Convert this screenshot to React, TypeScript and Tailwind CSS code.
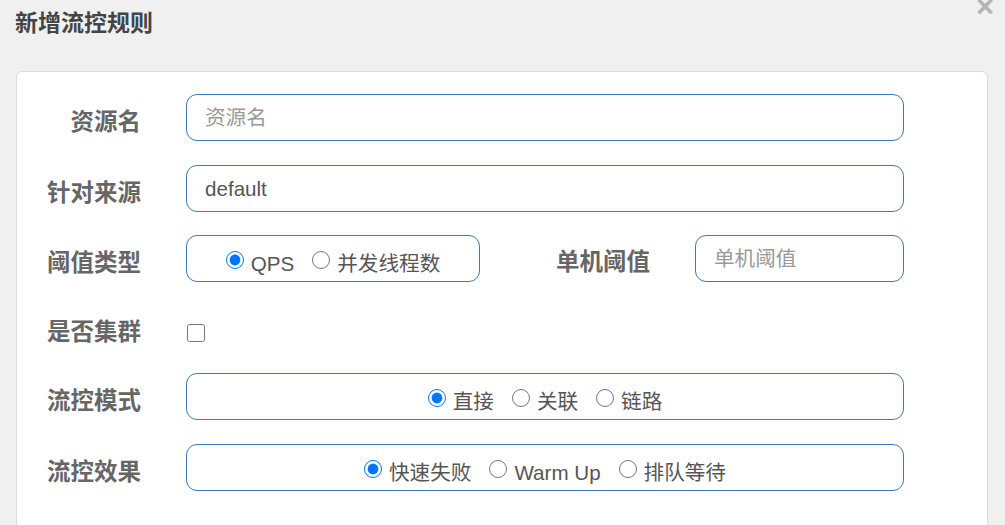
import { useState } from "react";

const font = { fontFamily: '"Liberation Sans", "Noto Sans CJK SC", sans-serif' };

const Label = ({ text, className = "w-[124px] translate-y-[5px]" }: { text: string; className?: string }) => (
    <div className={`${className} shrink-0 text-right text-[23.5px] font-bold text-[#666] leading-none`}>
        {text}
    </div>
);

const Radio = ({ label, checked, onChange }: { label: string; checked: boolean; onChange: () => void }) => (
    <label className="flex items-center gap-[7px] text-[20.6px] text-[#555] cursor-pointer">
        <input
            type="radio"
            checked={checked}
            onChange={onChange}
            className="m-0 w-[18px] h-[18px] -translate-y-[3px]"
        />
        <span className="translate-y-[1px]">{label}</span>
    </label>
);

const RadioGroup = ({ options, value, onChange, className }: {
    options: string[];
    value: string;
    onChange: (v: string) => void;
    className: string;
}) => (
    <div className={`${className} h-[47px] border border-[#3a7bbf] rounded-[11px] flex items-center justify-center gap-[18px] pt-[10px]`}>
        {options.map((o) => (
            <Radio key={o} label={o} checked={value === o} onChange={() => onChange(o)} />
        ))}
    </div>
);

const inputCls =
    "h-[47px] border border-[#3a7bbf] rounded-[11px] px-[18px] text-[20.6px] text-[#555] placeholder:text-[#999] outline-none bg-white";

export default function App() {
    const [grade, setGrade] = useState("QPS");
    const [strategy, setStrategy] = useState("直接");
    const [behavior, setBehavior] = useState("快速失败");
    const [origin, setOrigin] = useState("default");

    return (
        <div className="relative h-[525px] overflow-hidden bg-[#f0f0f0]" style={font}>
            {/* Header */}
            <div className="h-[71px] px-[15px] pt-[11px]">
                <h4 className="text-[23px] font-bold text-[#444] leading-[25px]">新增流控规则</h4>
            </div>
            <button className="absolute right-[11px] -top-[9px] text-[31px] font-bold text-[#b3b3b3] leading-none">
                ×
            </button>

            {/* Card */}
            <div className="mx-[16px] mr-[17px] h-[500px] bg-white border border-[#dcdcdc] rounded-[6px] pt-[22px]">
                <div className="flex items-center">
                    <Label text="资源名" />
                    <input className={`${inputCls} ml-[45px] w-[718px]`} placeholder="资源名" />
                </div>

                <div className="flex items-center mt-[24px]">
                    <Label text="针对来源" />
                    <input
                        className={`${inputCls} ml-[45px] w-[718px]`}
                        value={origin}
                        onChange={(e) => setOrigin(e.target.value)}
                    />
                </div>

                <div className="flex items-center mt-[23px]">
                    <Label text="阈值类型" />
                    <RadioGroup
                        className="ml-[45px] w-[294px]"
                        options={["QPS", "并发线程数"]}
                        value={grade}
                        onChange={setGrade}
                    />
                    <Label text="单机阈值" className="w-[170px] translate-y-[4px]" />
                    <input className={`${inputCls} ml-[45px] w-[209px]`} placeholder="单机阈值" />
                </div>

                <div className="flex items-center h-[40px] mt-[31px]">
                    <Label text="是否集群" className="w-[124px]" />
                    <input type="checkbox" className="ml-[46px] m-0 w-[18px] h-[18px]" />
                </div>

                <div className="flex items-center mt-[20px]">
                    <Label text="流控模式" />
                    <RadioGroup
                        className="ml-[45px] w-[718px]"
                        options={["直接", "关联", "链路"]}
                        value={strategy}
                        onChange={setStrategy}
                    />
                </div>

                <div className="flex items-center mt-[24px]">
                    <Label text="流控效果" />
                    <RadioGroup
                        className="ml-[45px] w-[718px]"
                        options={["快速失败", "Warm Up", "排队等待"]}
                        value={behavior}
                        onChange={setBehavior}
                    />
                </div>
            </div>
        </div>
    );
}
